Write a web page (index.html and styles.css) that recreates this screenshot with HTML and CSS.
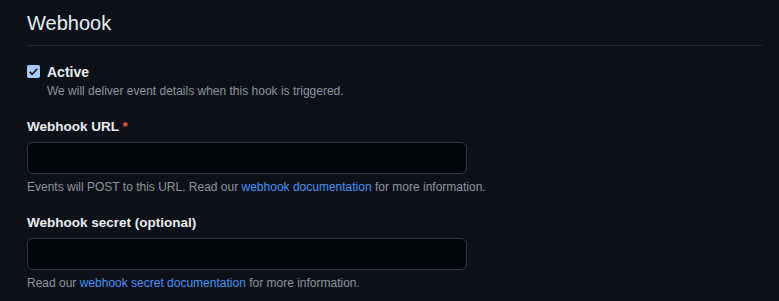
FILE: index.html
```html
<!DOCTYPE html>
<html lang="en">
<head>
  <meta charset="UTF-8" />
  <title>Webhook</title>
  <link rel="stylesheet" href="styles.css">
</head>
<body>
  <div class="settings">
    <div class="subhead">
      <h2>Webhook</h2>
    </div>

    <!-- Active toggle -->
    <div class="check-group">
      <span class="check-box">
        <svg width="11" height="11" viewBox="0 0 16 16"><path d="M2.5 8.5l3.5 3.5 7.5-8" fill="none" stroke="#1c2128" stroke-width="2.6"/></svg>
      </span>
      <div>
        <label class="check-label">Active</label>
        <p class="note">We will deliver event details when this hook is triggered.</p>
      </div>
    </div>

    <div class="form-group">
      <label for="hookUrl">Webhook URL <span class="required">*</span></label>
      <input type="text" id="hookUrl" />
      <p class="note">Events will POST to this URL. Read our <a href="#">webhook documentation</a> for more information.</p>
    </div>

    <div class="form-group">
      <label for="hookSecret">Webhook secret (optional)</label>
      <input type="text" id="hookSecret" />
      <p class="note">Read our <a href="#">webhook secret documentation</a> for more information.</p>
    </div>
  </div>
</body>
</html>
```

FILE: styles.css
```css
:root {
  --bg: #0d1117;
  --input-bg: #010409;
  --border: #30363d;
  --divider: #21262d;
  --text: #e6edf3;
  --text-muted: #8b949e;
  --link: #4493f8;
  --danger: #f85149;
}

* { margin: 0; padding: 0; box-sizing: border-box; }

body {
  font-family: "Liberation Sans", Arial, sans-serif;
  background: var(--bg);
  color: var(--text);
}

.settings {
  padding: 8px 17px 0 27px;
}

.subhead {
  border-bottom: 1px solid var(--divider);
  padding-bottom: 7px;
  margin-bottom: 16px;
}
.subhead h2 {
  font-size: 20px;
  font-weight: 400;
  line-height: 30px;
}

.check-group {
  display: flex;
  align-items: flex-start;
  gap: 7px;
  margin-bottom: 17px;
}
.check-box {
  width: 13px; height: 13px;
  margin-top: 3px;
  border-radius: 2px;
  background: #a8c9fb;
  display: flex; align-items: center; justify-content: center;
}
.check-label {
  display: block;
  font-weight: 700;
  font-size: 14px;
  line-height: 20px;
}

.note {
  font-size: 12px;
  line-height: 18px;
  color: var(--text-muted);
}
.note a {
  color: var(--link);
  text-decoration: none;
}

.form-group { margin-bottom: 17px; }
.form-group label {
  display: block;
  font-weight: 700;
  font-size: 13.5px;
  line-height: 20px;
  margin-bottom: 5px;
}
.required { color: var(--danger); }
.form-group input {
  display: block;
  width: 440px;
  height: 32px;
  background: var(--input-bg);
  border: 1px solid var(--border);
  border-radius: 6px;
  color: var(--text);
  margin-bottom: 4px;
}
```
